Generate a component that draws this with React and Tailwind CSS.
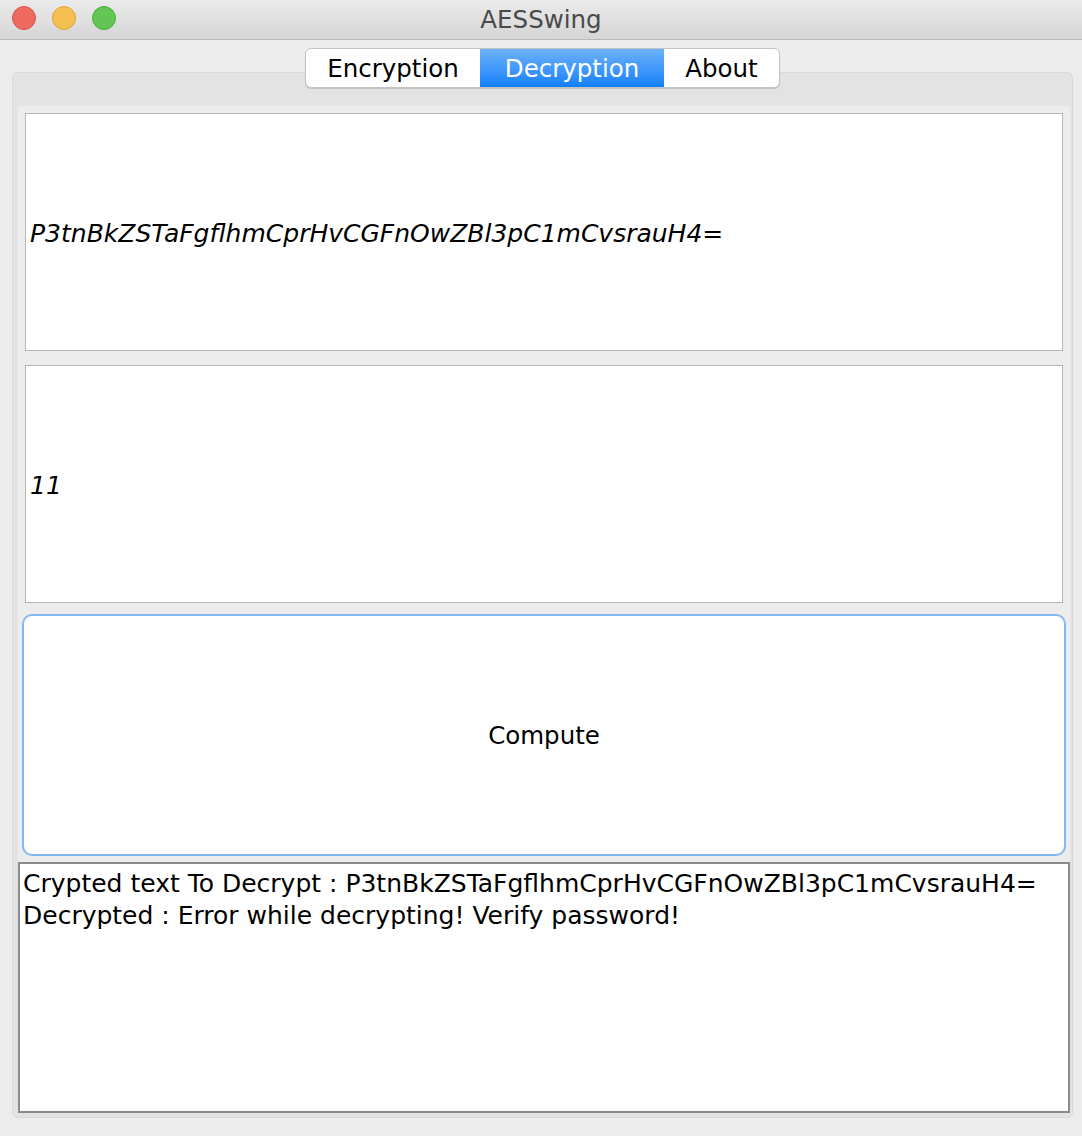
import React from 'react';

const font = { fontFamily: '"DejaVu Sans", "Open Sans", sans-serif' };
const cipher = 'P3tnBkZSTaFgflhmCprHvCGFnOwZBl3pC1mCvsrauH4=';

function Field({ value }) {
  return (
    <div className="h-[238px] bg-white border border-[#b5b5b5] flex items-center px-[4px] pt-[4px]">
      <span className="italic text-[25px] text-black">{value}</span>
    </div>
  );
}

export default function App() {
  return (
    <div className="w-[1082px] h-[1136px] bg-[#ececec] flex flex-col overflow-hidden" style={font}>
      {/* title bar */}
      <div className="h-[40px] relative flex items-center justify-center pt-[2px] bg-gradient-to-b from-[#ebebeb] to-[#d5d5d5] border-b border-[#b9b9b9]">
        <div className="absolute left-[12px] top-[6px] flex gap-[16px]">
          <span className="w-[24px] h-[24px] rounded-full bg-[#ee6a5f] border border-[#d9544b]" />
          <span className="w-[24px] h-[24px] rounded-full bg-[#f5bf4f] border border-[#dba53b]" />
          <span className="w-[24px] h-[24px] rounded-full bg-[#62c554] border border-[#4dab40]" />
        </div>
        <span className="text-[24.5px] text-[#4a4a4a]">AESSwing</span>
      </div>

      <div className="flex-1 relative pl-[12px] pr-[9px] pt-[32px] pb-[18px] flex flex-col">
        {/* tabs */}
        <div className="absolute left-[305px] top-[8px] h-[40px] flex rounded-[6px] border border-[#c4c4c4] bg-white shadow-[0_1px_1px_rgba(0,0,0,0.15)] overflow-hidden text-[24.5px] z-10">
          <div className="w-[174px] flex items-center justify-center pt-[3px] text-black">Encryption</div>
          <div className="w-[184px] flex items-center justify-center pt-[3px] text-white bg-gradient-to-b from-[#69b1fa] to-[#0d7ffb]">Decryption</div>
          <div className="w-[115px] flex items-center justify-center pt-[3px] text-black">About</div>
        </div>

        <div className="flex-1 rounded-[6px] border border-[#d9d9d9] bg-[#e3e3e3] pt-[33px] pl-[5px] pr-[2px] pb-[4px] flex flex-col">
          <div className="flex-1 bg-[#ececec] flex flex-col">
            <div className="px-[7px] pt-[7px] flex flex-col gap-[14px]">
              <Field value={cipher} />
              <Field value="11" />
            </div>
            <div className="px-[4px] pt-[11px]">
              <div className="h-[242px] rounded-[10px] bg-white border-2 border-[#84b7ee] flex items-center justify-center pt-[2px] text-[24.5px] text-black">
                Compute
              </div>
            </div>
            <div className="pt-[6px] flex-1 flex flex-col">
              <div className="flex-1 bg-white border-2 border-[#8a8a8a] px-[3px] pt-[4px] text-[25px] leading-[32px] text-black whitespace-nowrap">
                <div>Crypted text To Decrypt : {cipher}</div>
                <div>Decrypted : Error while decrypting! Verify password!</div>
              </div>
            </div>
          </div>
        </div>
      </div>
    </div>
  );
}
